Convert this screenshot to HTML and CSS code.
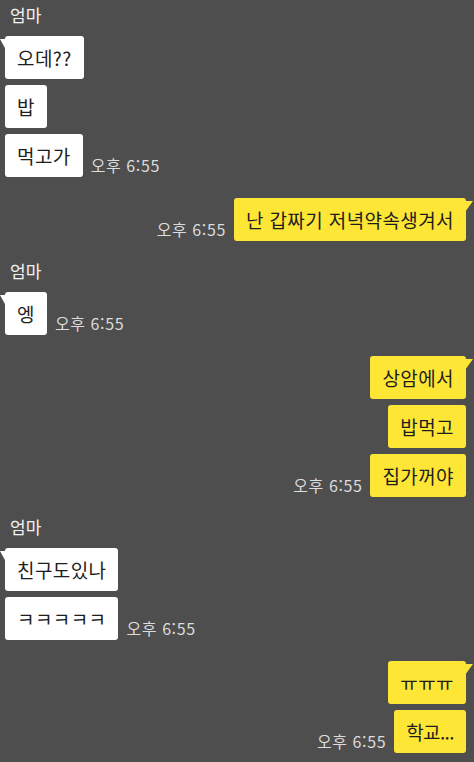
FILE: index.html
```html
<!DOCTYPE html>
<html lang="ko">
<head>
    <meta charset="UTF-8">
    <meta name="viewport" content="width=device-width, initial-scale=1.0">
    <title>엄마</title>
    <link rel="stylesheet" href="styles.css">
</head>
<body>
    <div class="chat">
        <!-- 엄마 -->
        <div class="group left">
            <div class="name">엄마</div>
            <div class="row"><div class="bubble tail">오데??</div></div>
            <div class="row"><div class="bubble">밥</div></div>
            <div class="row"><div class="bubble">먹고가</div><span class="time">오후 6:55</span></div>
        </div>
        <!-- 나 -->
        <div class="group right">
            <div class="row"><span class="time">오후 6:55</span><div class="bubble tail">난 갑짜기 저녁약속생겨서</div></div>
        </div>
        <!-- 엄마 -->
        <div class="group left">
            <div class="name">엄마</div>
            <div class="row"><div class="bubble tail">엥</div><span class="time">오후 6:55</span></div>
        </div>
        <!-- 나 -->
        <div class="group right">
            <div class="row"><div class="bubble tail">상암에서</div></div>
            <div class="row"><div class="bubble">밥먹고</div></div>
            <div class="row"><span class="time">오후 6:55</span><div class="bubble">집가꺼야</div></div>
        </div>
        <!-- 엄마 -->
        <div class="group left">
            <div class="name">엄마</div>
            <div class="row"><div class="bubble tail">친구도있나</div></div>
            <div class="row"><div class="bubble">ㅋㅋㅋㅋㅋ</div><span class="time">오후 6:55</span></div>
        </div>
        <!-- 나 -->
        <div class="group right">
            <div class="row"><div class="bubble tail">ㅠㅠㅠ</div></div>
            <div class="row"><span class="time">오후 6:55</span><div class="bubble dots">학교...</div></div>
        </div>
    </div>
</body>
</html>
```

FILE: styles.css
```css
body {
    margin: 0;
    background: #4e4e4e;
    font-family: "Noto Sans CJK KR", "Malgun Gothic", sans-serif;
}
.chat {
    display: flex;
    flex-direction: column;
    gap: 21px;
    padding: 6px 8px 0 5px;
}
.group {
    display: flex;
    flex-direction: column;
    gap: 6px;
}
.name {
    color: #f2f2f2;
    font-size: 17px;
    line-height: 22px;
    margin-top: -2px;
    padding: 0 0 4px 5px;
}
.row {
    display: flex;
    align-items: flex-end;
    gap: 8px;
}
.right .row {
    justify-content: flex-end;
}
.bubble {
    position: relative;
    font-size: 19px;
    line-height: 25px;
    letter-spacing: 0.4px;
    padding: 9px 12px;
    border-radius: 3px;
    background: #ffffff;
    color: #1e1e1e;
}
.bubble.dots {
    letter-spacing: -0.6px;
}
.right .bubble {
    background: #fde636;
}
.bubble.tail::before {
    content: "";
    position: absolute;
    top: 3px;
    width: 6px;
    height: 11px;
}
.left .bubble.tail::before {
    left: -5px;
    background: #ffffff;
    clip-path: polygon(0 0, 100% 0, 100% 100%);
}
.right .bubble.tail::before {
    right: -7px;
    width: 8px;
    background: #fde636;
    clip-path: polygon(0 0, 100% 0, 0 100%);
}
.time {
    color: #dcdcdc;
    font-size: 16px;
    line-height: 20px;
    letter-spacing: 0.6px;
    padding-bottom: 2px;
}
```
